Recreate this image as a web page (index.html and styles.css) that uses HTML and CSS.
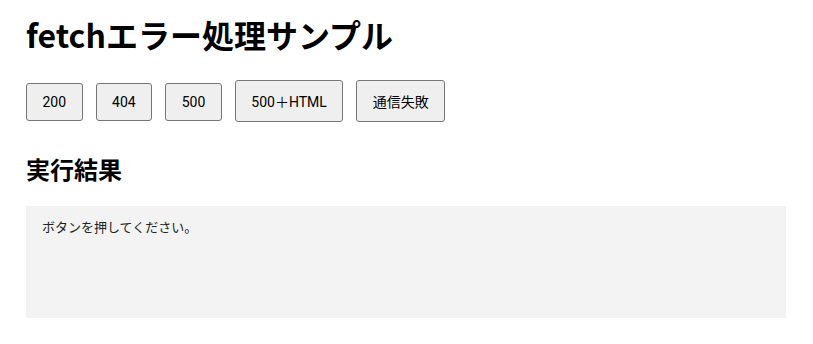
FILE: index.html
```html
<!DOCTYPE html>
<html lang="ja">
<head>
<meta charset="utf-8">
<title>fetchエラー処理サンプル</title>
<link rel="stylesheet" href="styles.css">
</head>
<body>
<main class="page">
  <h1 class="title">fetchエラー処理サンプル</h1>
  <div class="buttons">
    <button class="btn" type="button">200</button>
    <button class="btn" type="button">404</button>
    <button class="btn" type="button">500</button>
    <button class="btn" type="button">500＋HTML</button>
    <button class="btn" type="button">通信失敗</button>
  </div>
  <h2 class="subtitle">実行結果</h2>
  <div class="result">ボタンを押してください。</div>
</main>
</body>
</html>
```

FILE: styles.css
```css
html, body {
  margin: 0;
  padding: 0;
  background: #ffffff;
}

body {
  font-family: "Noto Sans CJK JP", "Noto Sans", sans-serif;
  color: #000000;
}

.page {
  display: flex;
  flex-direction: column;
  padding: 11px 27px 0 26px;
}

.title {
  margin: 0;
  font-size: 32px;
  font-weight: 700;
  line-height: normal;
}

.buttons {
  display: flex;
  align-items: baseline;
  gap: 13px;
  margin-top: 22.7px;
}

.btn {
  font-family: Roboto, "Noto Sans CJK JP", sans-serif;
  font-size: 14px;
  color: #000000;
  background: #efefef;
  border: 1px solid #767676;
  border-radius: 3px;
  padding: 10px 15.5px;
  margin: 0;
  line-height: normal;
}

.subtitle {
  margin: 29px 0 0 0;
  font-size: 24px;
  font-weight: 700;
  line-height: normal;
}

.result {
  margin-top: 20.3px;
  box-sizing: border-box;
  height: 112px;
  padding: 11px 16px;
  background: #f3f3f3;
  font-size: 13px;
  color: #222222;
  line-height: normal;
}
```
